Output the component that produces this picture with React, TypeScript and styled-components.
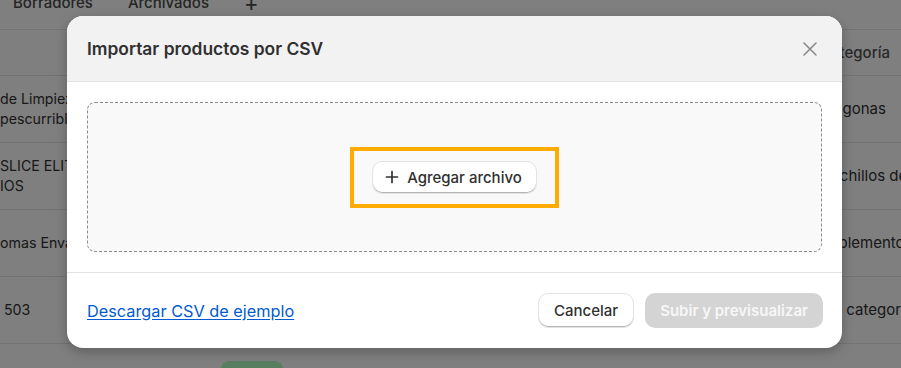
import type { FC } from "react";
import styled, { createGlobalStyle } from "styled-components";

const GlobalStyle = createGlobalStyle`
  html, body {
    margin: 0;
    padding: 0;
    background: #ffffff;
    font-family: Inter, "Noto Sans", "Liberation Sans", sans-serif;
    -webkit-font-smoothing: antialiased;
  }
`;

type Row = { name: string[]; status?: string; stock?: string; category: string };

const rows: Row[] = [
  { name: ["de Limpieza Multiuso", "pescurrible"], category: "Fregonas" },
  { name: ["SLICE ELITE", "IOS"], category: "Cuchillos de cocina" },
  { name: ["omas Envasados"], category: "Suplementos" },
  { name: ["\u00a0503"], category: "Sin categoría" },
  { name: ["DAMA PRETA"], status: "Activo", stock: "0 en existencias para 4 variantes", category: "Pantalones" },
];

const App: FC = () => {
  return (
    <>
      <GlobalStyle />
      <Screen>
        {/* Page behind the modal */}
        <Page>
          <Tabs>
            <Tab>Borradores</Tab>
            <Tab>Archivados</Tab>
            <Tab $icon>+</Tab>
          </Tabs>
          <Table>
            <HeadRow>
              <Cell />
              <Cell />
              <Cell />
              <Cell>Categoría</Cell>
            </HeadRow>
            {rows.map((r, i) => (
              <BodyRow key={i}>
                <Cell>
                  <Lines>
                    {r.name.map((l) => (
                      <span key={l}>{l}</span>
                    ))}
                  </Lines>
                </Cell>
                <Cell>{r.status && <Badge>{r.status}</Badge>}</Cell>
                <Cell>{r.stock}</Cell>
                <Cell>{r.category}</Cell>
              </BodyRow>
            ))}
          </Table>
        </Page>

        <Backdrop>
          <Modal>
            <Header>
              <Title>Importar productos por CSV</Title>
              <CloseButton aria-label="Cerrar">
                <svg width="20" height="20" viewBox="0 0 20 20" fill="none">
                  <path d="M4 4l12 12M16 4L4 16" stroke="#8a8a8a" strokeWidth="1.6" strokeLinecap="round" />
                </svg>
              </CloseButton>
            </Header>

            <Body>
              <DropZone>
                <FocusRing>
                  <SecondaryButton>
                    <svg width="14" height="14" viewBox="0 0 14 14" fill="none">
                      <path d="M7 1.5v11M1.5 7h11" stroke="#303030" strokeWidth="1.7" strokeLinecap="round" />
                    </svg>
                    Agregar archivo
                  </SecondaryButton>
                </FocusRing>
              </DropZone>
            </Body>

            <Footer>
              <Link href="#">Descargar CSV de ejemplo</Link>
              <Actions>
                <SecondaryButton $wide>Cancelar</SecondaryButton>
                <PrimaryButton disabled>Subir y previsualizar</PrimaryButton>
              </Actions>
            </Footer>
          </Modal>
        </Backdrop>
      </Screen>
    </>
  );
};

const Screen = styled.div`
  position: relative;
  width: 901px;
  height: 368px;
  overflow: hidden;
  background: #ffffff;
`;

const Page = styled.div`
  display: flex;
  flex-direction: column;
  color: #303030;
  line-height: 20px;
`;

const Tabs = styled.div`
  display: flex;
  align-items: center;
  gap: 35px;
  height: 20px;
  margin: -7px 0 16px 13px;
  font-size: 15px;
  color: #4a4a4a;
`;

const Tab = styled.span<{ $icon?: boolean }>`
  white-space: nowrap;
  font-size: ${(p) => (p.$icon ? "22px" : "inherit")};
  font-weight: ${(p) => (p.$icon ? 400 : 500)};
`;

const Table = styled.div`
  display: flex;
  flex-direction: column;
`;

const HeadRow = styled.div`
  display: grid;
  grid-template-columns: 221px 201px 398px 1fr;
  height: 45px;
  align-items: center;
  border-top: 1px solid #e6e6e6;
  background: #ffffff;
  font-size: 15px;
  font-weight: 500;
  color: #505050;
`;

const BodyRow = styled(HeadRow)`
  height: 66px;
  font-weight: 400;
  color: #303030;
`;

const Cell = styled.div`
  white-space: nowrap;
  overflow: hidden;
`;

const Lines = styled.div`
  display: flex;
  flex-direction: column;
  font-size: 14.2px;
`;

const Badge = styled.span`
  display: inline-block;
  padding: 6px 10px;
  border-radius: 8px;
  background: #affebf;
  color: #014b40;
  font-size: 14px;
`;

const Backdrop = styled.div`
  position: absolute;
  inset: 0;
  background: rgba(0, 0, 0, 0.5);
  display: flex;
  align-items: flex-start;
  padding: 16px 0 0 67px;
`;

const Modal = styled.div`
  width: 775px;
  border-radius: 16px;
  overflow: hidden;
  background: #ffffff;
  box-shadow: 0 4px 12px rgba(0, 0, 0, 0.25);
  display: flex;
  flex-direction: column;
`;

const Header = styled.div`
  display: flex;
  align-items: center;
  justify-content: space-between;
  height: 65px;
  padding: 0 20px;
  background: #f2f2f2;
  border-bottom: 1px solid #e3e3e3;
`;

const Title = styled.h2`
  margin: 0;
  font-size: 17.4px;
  font-weight: 600;
  color: #303030;
`;

const CloseButton = styled.button`
  display: flex;
  align-items: center;
  justify-content: center;
  width: 28px;
  height: 28px;
  margin-right: -2px;
  padding: 0;
  border: none;
  background: transparent;
  cursor: pointer;
`;

const Body = styled.div`
  padding: 20px;
  border-bottom: 1px solid #e3e3e3;
`;

const DropZone = styled.div`
  display: flex;
  align-items: center;
  justify-content: center;
  height: 148px;
  border: 1px dashed #8a8a8a;
  border-radius: 8px;
  background: #f9f9f9;
`;

const FocusRing = styled.div`
  display: flex;
  padding: 10px 18px;
  border: 4px solid #ffab00;
`;

const SecondaryButton = styled.button<{ $wide?: boolean }>`
  display: inline-flex;
  align-items: center;
  gap: 8px;
  height: ${(p) => (p.$wide ? "35px" : "33px")};
  padding: ${(p) => (p.$wide ? "0 15px" : "0 14px 0 12px")};
  border: 1px solid #e3e3e3;
  border-radius: 10px;
  background: #ffffff;
  box-shadow: inset 0 -1px 0 #b5b5b5;
  font-family: inherit;
  font-size: 15px;
  font-weight: 500;
  color: #303030;
  cursor: pointer;
`;

const Footer = styled.div`
  display: flex;
  align-items: center;
  justify-content: space-between;
  padding: 20px 19px 20px 20px;
`;

const Link = styled.a`
  font-size: 16.3px;
  color: #005bd3;
  text-decoration: underline;
  text-underline-offset: 2px;
`;

const Actions = styled.div`
  display: flex;
  gap: 11px;
`;

const PrimaryButton = styled.button`
  height: 35px;
  padding: 0 15px;
  border: none;
  border-radius: 10px;
  background: #d4d4d4;
  font-family: inherit;
  font-size: 15px;
  font-weight: 600;
  color: #f7f7f7;
`;

export default App;
